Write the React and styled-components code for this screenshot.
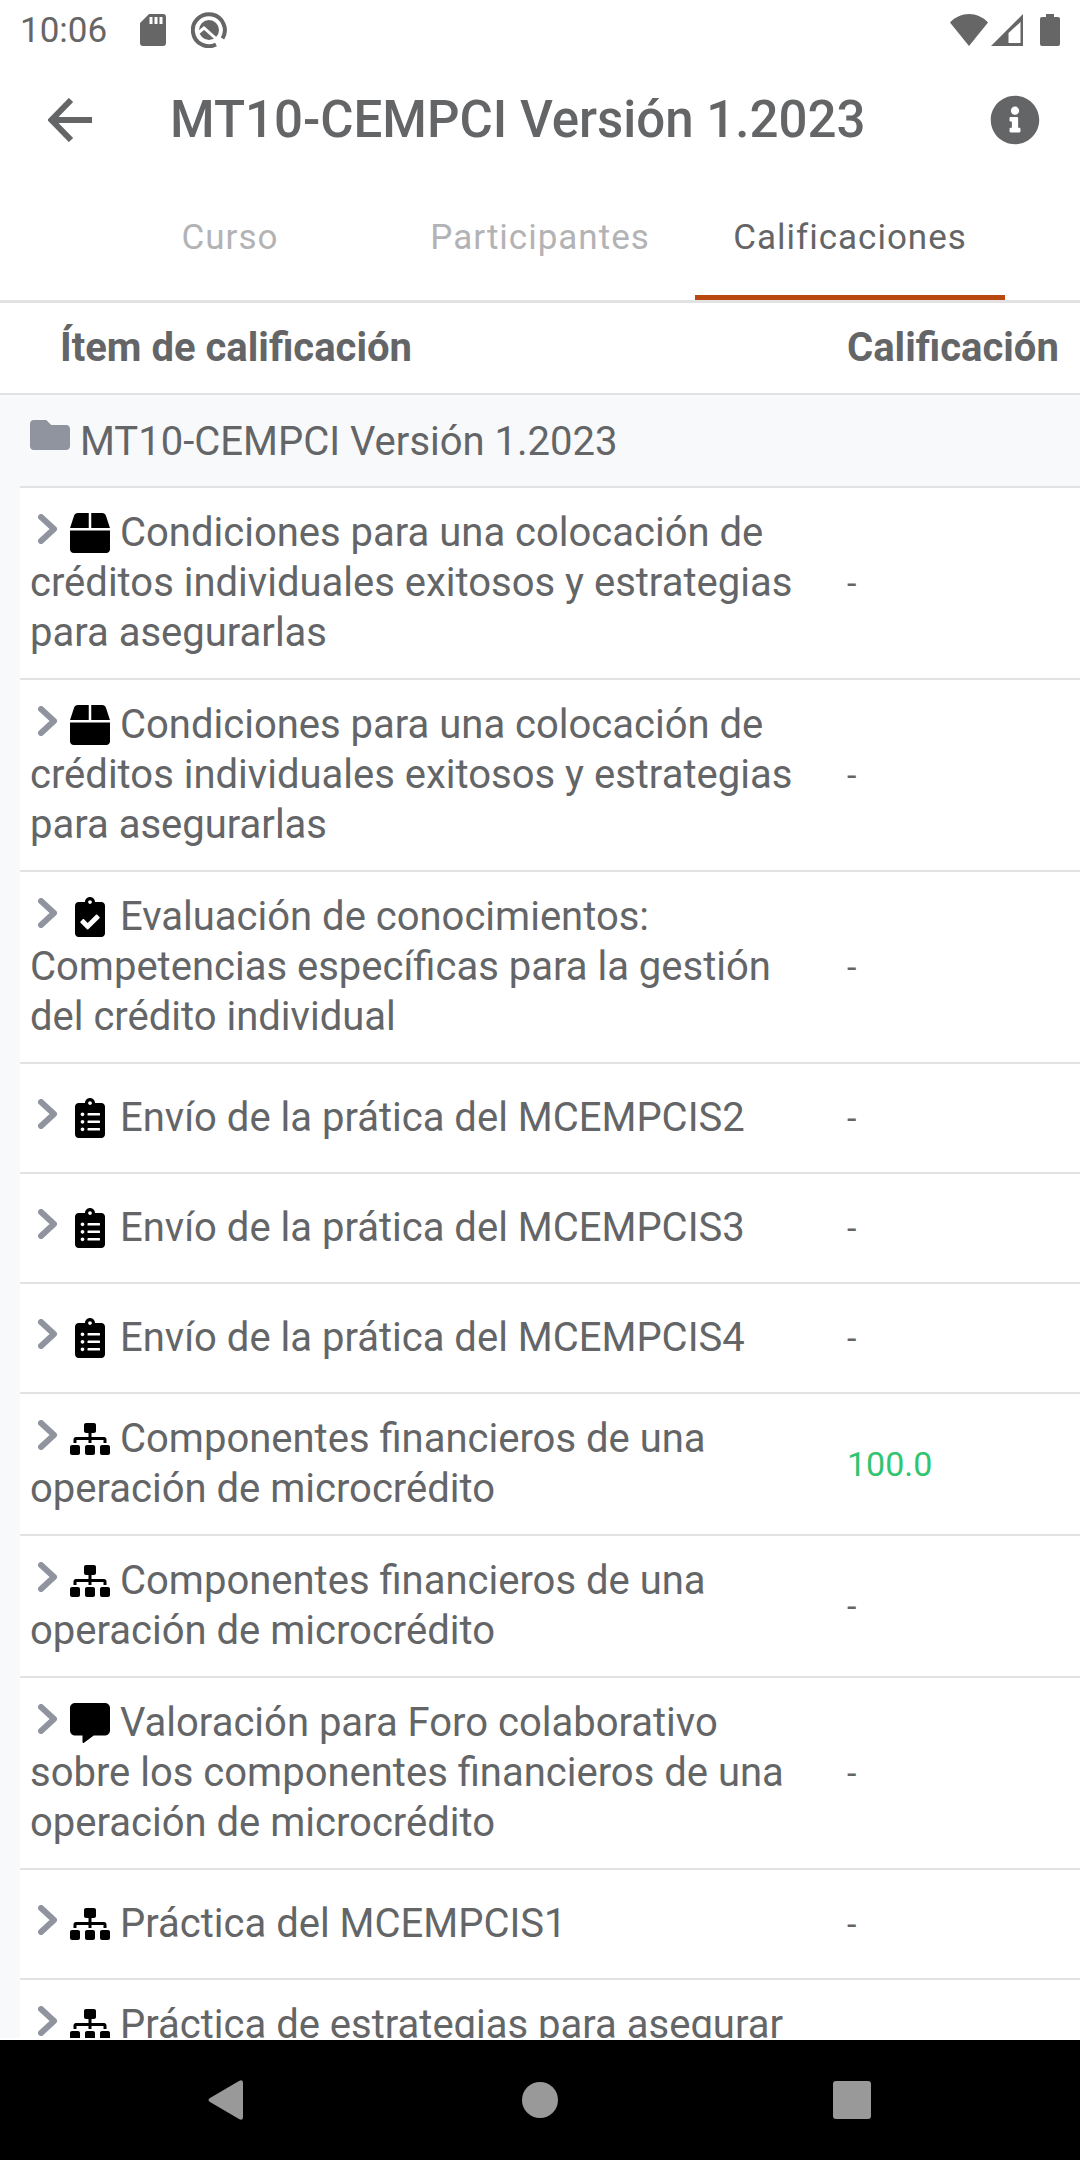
import React, { useState } from "react";
import styled, { createGlobalStyle } from "styled-components";
import {
  FaBox,
  FaClipboardCheck,
  FaClipboardList,
  FaCommentAlt,
  FaFolder,
  FaInfoCircle,
  FaSitemap,
} from "react-icons/fa";

const icons = {
  scorm: FaBox,
  quiz: FaClipboardCheck,
  assign: FaClipboardList,
  h5p: FaSitemap,
  forum: FaCommentAlt,
};

const tabs = ["Curso", "Participantes", "Calificaciones"];

const items = [
  {
    id: 1,
    type: "scorm",
    name: "Condiciones para una colocación de créditos individuales exitosos y estrategias para asegurarlas",
    grade: "-",
  },
  {
    id: 2,
    type: "scorm",
    name: "Condiciones para una colocación de créditos individuales exitosos y estrategias para asegurarlas",
    grade: "-",
  },
  {
    id: 3,
    type: "quiz",
    name: "Evaluación de conocimientos: Competencias específicas para la gestión del crédito individual",
    grade: "-",
  },
  { id: 4, type: "assign", name: "Envío de la prática del MCEMPCIS2", grade: "-" },
  { id: 5, type: "assign", name: "Envío de la prática del MCEMPCIS3", grade: "-" },
  { id: 6, type: "assign", name: "Envío de la prática del MCEMPCIS4", grade: "-" },
  {
    id: 7,
    type: "h5p",
    name: "Componentes financieros de una operación de microcrédito",
    grade: "100.0",
    passed: true,
  },
  {
    id: 8,
    type: "h5p",
    name: "Componentes financieros de una operación de microcrédito",
    grade: "-",
  },
  {
    id: 9,
    type: "forum",
    name: "Valoración para Foro colaborativo sobre los componentes financieros de una operación de microcrédito",
    grade: "-",
  },
  { id: 10, type: "h5p", name: "Práctica del MCEMPCIS1", grade: "-" },
  {
    id: 11,
    type: "h5p",
    name: "Práctica de estrategias para asegurar",
    grade: "",
    compact: true,
  },
];

const App = () => {
  const [activeTab, setActiveTab] = useState("Calificaciones");

  return (
    <Wrapper>
      <GlobalStyle />
      <StatusBar>
        <StatusGroup>
          <Time>10:06</Time>
          <SdCard viewBox="0 0 26 32">
            <path
              fillRule="evenodd"
              d="M9 0H23a3 3 0 0 1 3 3V29a3 3 0 0 1-3 3H3a3 3 0 0 1-3-3V9ZM9.500 3V10H12.500V3ZM14.500 3V10H17.500V3ZM19.500 3V10H22.500V3Z"
            />
          </SdCard>
          <QIcon viewBox="0 0 36 36">
            <path
              d="M25 32.500A16 16 0 1 1 31.500 26.500"
              fill="none"
              stroke="currentColor"
              strokeWidth="4"
            />
            <circle cx="18" cy="18" r="10" />
            <path
              d="M7 21L13 16L31 32"
              fill="none"
              stroke="#fff"
              strokeWidth="3"
            />
          </QIcon>
        </StatusGroup>
        <StatusGroup $tight>
          <Wifi viewBox="0 0 38 32">
            <path d="M19 32L0 8.500C5 3 12 0 19 0S33 3 38 8.500Z" />
          </Wifi>
          <Signal viewBox="0 0 32 32">
            <path fillRule="evenodd" d="M32 0V32H0ZM29.500 8L17.500 19V29H29.500Z" />
          </Signal>
          <Battery viewBox="0 0 20 32">
            <path d="M6 0H14V3H18a2 2 0 0 1 2 2V30a2 2 0 0 1-2 2H2a2 2 0 0 1-2-2V5a2 2 0 0 1 2-2H6Z" />
          </Battery>
        </StatusGroup>
      </StatusBar>

      <Toolbar>
        <IconButton aria-label="Atrás">
          <svg viewBox="0 0 44 44" width="44" height="44">
            <path
              d="M44 22H4M23 2L3.500 22L23 42"
              fill="none"
              stroke="currentColor"
              strokeWidth="6"
            />
          </svg>
        </IconButton>
        <Title>MT10-CEMPCI Versión 1.2023</Title>
        <IconButton aria-label="Información">
          <FaInfoCircle size={50} />
        </IconButton>
      </Toolbar>

      <Tabs role="tablist">
        {tabs.map((tab) => {
          return (
            <Tab
              key={tab}
              role="tab"
              aria-selected={tab === activeTab}
              $active={tab === activeTab}
              onClick={() => setActiveTab(tab)}
            >
              {tab}
            </Tab>
          );
        })}
      </Tabs>

      <Content>
        <Table>
          <colgroup>
            <IndentCol />
            <col />
            <GradeCol />
          </colgroup>
          <thead>
            <tr>
              <ItemHeading scope="col" colSpan={2}>
                Ítem de calificación
              </ItemHeading>
              <Heading scope="col">Calificación</Heading>
            </tr>
          </thead>
          <tbody>
            <tr>
              <Category colSpan={3}>
                <FolderIcon />
                MT10-CEMPCI Versión 1.2023
              </Category>
            </tr>
            {items.map((item, index) => {
              const Icon = icons[item.type];
              return (
                <tr key={item.id}>
                  {index === 0 && <Indent rowSpan={items.length} />}
                  <Name $compact={item.compact}>
                    <Chevron viewBox="0 0 20 30">
                      <path d="M3 3L16 15L3 27" />
                    </Chevron>
                    <ModIcon as={Icon} />
                    {item.name}
                  </Name>
                  <Grade $passed={item.passed}>{item.grade}</Grade>
                </tr>
              );
            })}
          </tbody>
        </Table>
      </Content>

      <NavBar>
        <NavButton aria-label="Volver">
          <svg viewBox="0 0 40 40" width="40" height="40">
            <path d="M2 18L31 1Q35 -1 35 3V37Q35 41 31 39L2 22Q-1 20 2 18Z" />
          </svg>
        </NavButton>
        <NavButton aria-label="Inicio">
          <svg viewBox="0 0 40 40" width="40" height="40">
            <circle cx="20" cy="20" r="18" />
          </svg>
        </NavButton>
        <NavButton aria-label="Recientes">
          <svg viewBox="0 0 40 40" width="40" height="40">
            <rect x="1" y="1" width="38" height="38" rx="3" />
          </svg>
        </NavButton>
      </NavBar>
    </Wrapper>
  );
};

const GlobalStyle = createGlobalStyle`
  * {
    box-sizing: border-box;
  }
  body {
    margin: 0;
    background: #fff;
    color: #646567;
    font-family: Roboto, "Liberation Sans", sans-serif;
  }
  button {
    padding: 0;
    border: none;
    background: none;
    color: inherit;
    font-family: inherit;
    cursor: pointer;
  }
`;

const Wrapper = styled.div`
  display: flex;
  flex-direction: column;
  height: 100vh;
  overflow: hidden;
`;

const StatusBar = styled.div`
  display: flex;
  justify-content: space-between;
  align-items: center;
  flex-shrink: 0;
  height: 60px;
  padding: 0 20px;
  color: #666;
`;

const StatusGroup = styled.div`
  display: flex;
  align-items: center;
  gap: ${(props) => (props.$tight ? "3px" : "25px")};

  svg {
    fill: currentColor;
  }
`;

const Time = styled.span`
  font-size: 35px;
`;

const SdCard = styled.svg`
  width: 26px;
  height: 32px;
  margin-left: 8px;
`;

const QIcon = styled.svg`
  width: 36px;
  height: 36px;
`;

const Wifi = styled.svg`
  width: 38px;
  height: 32px;
`;

const Signal = styled.svg`
  width: 32px;
  height: 32px;
`;

const Battery = styled.svg`
  width: 20px;
  height: 32px;
  margin-left: 14px;
`;

const Toolbar = styled.header`
  display: flex;
  align-items: center;
  flex-shrink: 0;
  height: 120px;
  padding: 0 40px 0 45px;
`;

const IconButton = styled.button`
  display: flex;
  align-items: center;
  justify-content: center;
  width: 50px;
  height: 50px;
`;

const Title = styled.h1`
  flex: 1;
  margin: 0;
  padding-left: 75px;
  font-size: 51px;
  line-height: 60px;
  font-weight: 500;
`;

const Tabs = styled.nav`
  display: flex;
  flex-shrink: 0;
  height: 123px;
  padding: 0 75px;
  border-bottom: 3px solid #e2e2e2;
`;

const Tab = styled.button`
  flex: 1;
  border-bottom: 5px solid ${(props) => (props.$active ? "#b94710" : "transparent")} !important;
  color: ${(props) => (props.$active ? "#646567" : "#b3b3b5")} !important;
  font-size: 35px;
  letter-spacing: 1px;
`;

const Content = styled.main`
  flex: 1;
  min-height: 0;
  overflow: hidden;
  border-bottom: 2px solid #fff;
`;

const Table = styled.table`
  width: 100%;
  table-layout: fixed;
  border-collapse: separate;
  border-spacing: 0;
  font-size: 40px;
  line-height: 50px;
`;

const IndentCol = styled.col`
  width: 20px;
`;

const GradeCol = styled.col`
  width: 243px;
`;

const Heading = styled.th`
  height: 92px;
  padding: 0 10px;
  border-bottom: 2px solid #e2e2e2;
  font-weight: 700;
  text-align: left;
`;

const ItemHeading = styled(Heading)`
  padding-left: 60px;
`;

const Category = styled.td`
  height: 91px;
  padding: 0 30px;
  background: #f8f9fb;
`;

const FolderIcon = styled(FaFolder)`
  margin-right: 10px;
  color: #8f949f;
  vertical-align: baseline;
`;

const Indent = styled.td`
  padding: 0;
  background: #f8f9fb;
`;

const Name = styled.td`
  height: ${(props) => (props.$compact ? "auto" : "110px")};
  padding: 20px 10px;
  border-top: 2px solid #e2e2e2;
`;

const Chevron = styled.svg`
  width: 20px;
  height: 30px;
  margin: 0 12px 0 8px;
  fill: none;
  stroke: #8f949f;
  stroke-width: 6;
  stroke-linecap: round;
  stroke-linejoin: round;
  vertical-align: 2px;
`;

const ModIcon = styled.svg`
  width: 40px;
  height: 40px;
  margin-right: 10px;
  color: #000;
  vertical-align: -7px;
`;

const Grade = styled.td`
  padding: 0 10px;
  border-top: 2px solid #e2e2e2;
  color: ${(props) => (props.$passed ? "#31c471" : "inherit")};
  font-size: 34px;
`;

const NavBar = styled.footer`
  display: flex;
  justify-content: center;
  align-items: center;
  gap: 272px;
  flex-shrink: 0;
  height: 120px;
  background: #000;
`;

const NavButton = styled.button`
  display: flex;

  svg {
    fill: #999;
  }
`;

export default App;
